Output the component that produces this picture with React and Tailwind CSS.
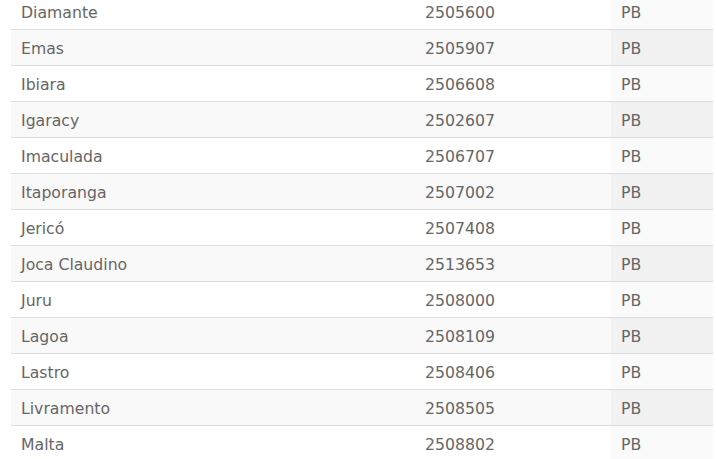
import React from "react";

const rows = [
  ["Diamante", "2505600"],
  ["Emas", "2505907"],
  ["Ibiara", "2506608"],
  ["Igaracy", "2502607"],
  ["Imaculada", "2506707"],
  ["Itaporanga", "2507002"],
  ["Jericó", "2507408"],
  ["Joca Claudino", "2513653"],
  ["Juru", "2508000"],
  ["Lagoa", "2508109"],
  ["Lastro", "2508406"],
  ["Livramento", "2508505"],
  ["Malta", "2508802"],
];

export default function App() {
  return (
    <div className="w-[716px] h-[459px] overflow-hidden bg-white">
      <div className="-mt-[7px] ml-[11px] w-[702px] font-['DejaVu_Sans',sans-serif] text-[15.7px] text-[#666]">
        {rows.map(([name, code], i) => {
          const odd = i % 2 === 1;
          return (
            <div
              key={name}
              className={`flex h-[36px] border-t border-[#ddd] ${odd ? "bg-[#f9f9f9]" : "bg-white"}`}
            >
              <div className="w-[404px] pl-[10px] pt-[3px] flex items-center">{name}</div>
              <div className="w-[196px] pl-[10px] pt-[3px] flex items-center">{code}</div>
              <div className={`flex-1 pl-[10px] pt-[3px] flex items-center ${odd ? "bg-[#f1f1f1]" : "bg-[#fafafa]"}`}>PB</div>
            </div>
          );
        })}
      </div>
    </div>
  );
}
